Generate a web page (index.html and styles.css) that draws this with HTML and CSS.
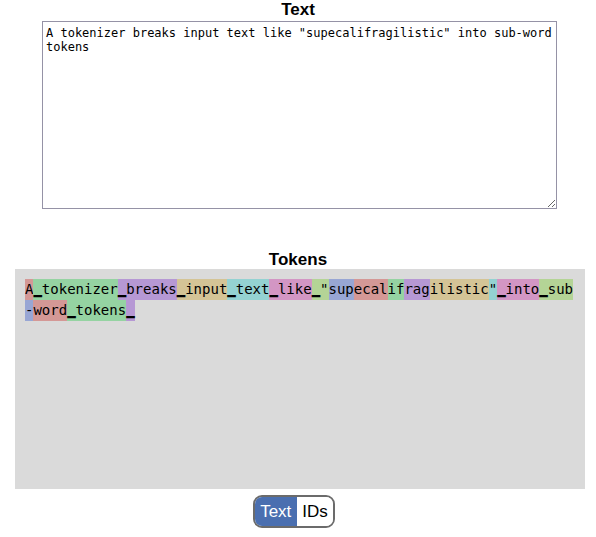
FILE: index.html
```html
<!DOCTYPE html>
<html>
<head>
<meta charset="utf-8">
<link rel="stylesheet" href="styles.css">
</head>
<body>
<h2 class="title">Text</h2>
<textarea class="input">A tokenizer breaks input text like "supecalifragilistic" into sub-word tokens</textarea>
<h2 class="title title-tokens">Tokens</h2>
<div class="tokens"><span class="tok c0">A</span><span class="tok c1">▁tokenizer</span><span class="tok c2">▁breaks</span><span class="tok c3">▁input</span><span class="tok c4">▁text</span><span class="tok c5">▁like</span><span class="tok c6">▁"</span><span class="tok c7">sup</span><span class="tok c0">ecal</span><span class="tok c1">if</span><span class="tok c2">rag</span><span class="tok c3">ilistic</span><span class="tok c4">"</span><span class="tok c5">▁into</span><span class="tok c6">▁sub</span><span class="tok c7">-</span><span class="tok c0">word</span><span class="tok c1">▁tokens</span><span class="tok c2">▁</span></div>
<div class="toggle-row">
  <div class="toggle">
    <span class="seg active">Text</span><span class="seg">IDs</span>
  </div>
</div>
</body>
</html>
```
FILE: styles.css
```css
html, body {
  margin: 0;
  padding: 0;
  background: #ffffff;
}

body {
  width: 596px;
  font-family: "Liberation Sans", Arial, sans-serif;
  color: #000;
}

.title {
  margin: 0;
  text-align: center;
  font-family: "Liberation Sans", Arial, sans-serif;
  font-weight: bold;
  font-size: 17px;
  line-height: 20px;
}

.title-tokens {
  margin-top: 41px;
  line-height: 19px;
}

.input {
  display: block;
  box-sizing: border-box;
  margin: 1px 0 0 42px;
  width: 515px;
  height: 188px;
  padding: 4px 1px 2px 3px;
  border: 1px solid #9592a6;
  font-family: "DejaVu Sans Mono", monospace;
  font-size: 12px;
  color: #000;
  background: #fff;
}

.tokens {
  box-sizing: border-box;
  margin: 0 11px 0 15px;
  height: 220px;
  padding: 10px;
  background: #dadada;
  font-family: "DejaVu Sans Mono", monospace;
  font-size: 14px;
  line-height: 0;
}

.tok {
  display: inline-block;
  line-height: 21px;
  height: 21px;
  vertical-align: top;
  white-space: pre;
  color: #000;
}

.c0 { background: #d49896; }
.c1 { background: #95d3a2; }
.c2 { background: #b698d4; }
.c3 { background: #d4c496; }
.c4 { background: #94d2d2; }
.c5 { background: #d396c4; }
.c6 { background: #b4d496; }
.c7 { background: #98a6d4; }

.toggle-row {
  display: flex;
  justify-content: center;
  margin-top: 6px;
  padding-right: 8px;
}

.toggle {
  display: flex;
  border: 2px solid #6b6b6b;
  border-radius: 9px;
  overflow: hidden;
  font-family: "Liberation Sans", Arial, sans-serif;
  font-size: 17px;
}

.seg {
  display: block;
  line-height: 29px;
  height: 29px;
  padding: 0 5.5px;
  background: #fff;
  color: #000;
}

.seg.active {
  background: #4a6fb0;
  color: #fff;
}
```
